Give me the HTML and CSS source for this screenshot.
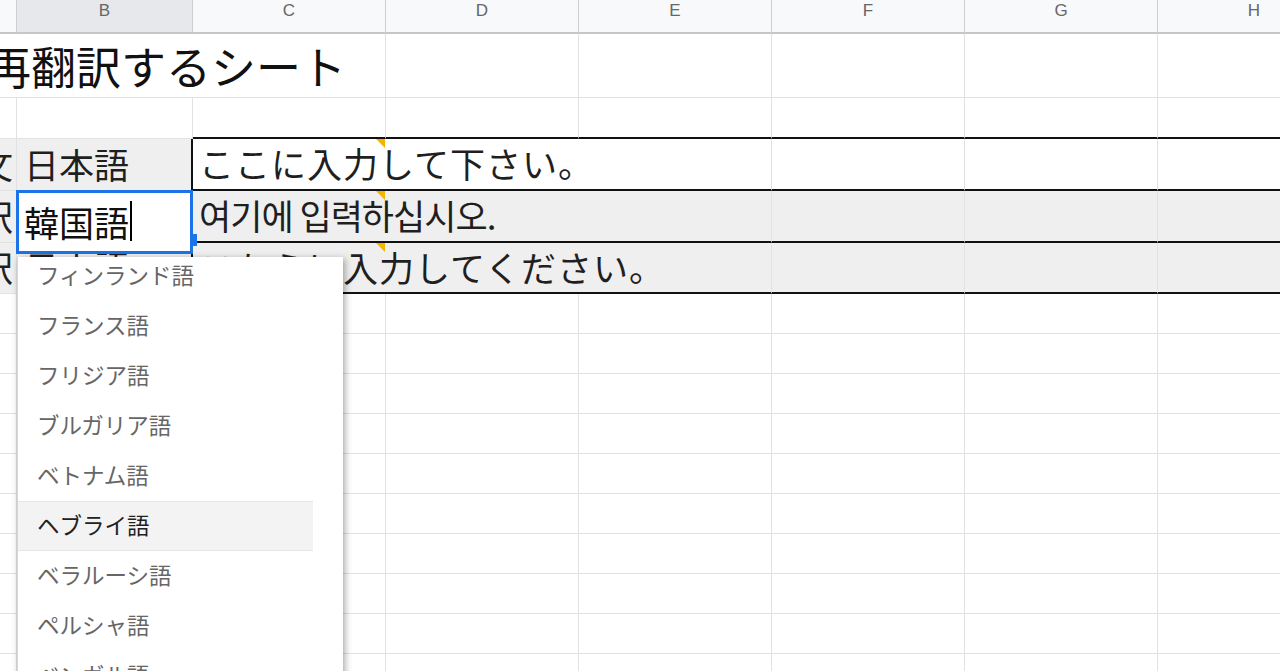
FILE: index.html
```html
<!DOCTYPE html>
<html>

<head>
  <title>再翻訳するシート</title>
  <link rel="stylesheet" href="styles.css">
</head>

<body>
  <div class="sheet">
    <div class="row heads">
      <div class="cell head col-a"></div>
      <div class="cell head col-b sel">B</div>
      <div class="cell head col">C</div>
      <div class="cell head col">D</div>
      <div class="cell head col">E</div>
      <div class="cell head col">F</div>
      <div class="cell head col">G</div>
      <div class="cell head col">H</div>
    </div>

    <div class="row r-title">
      <div class="cell title">再翻訳するシート</div>
      <div class="cell col"></div>
      <div class="cell col"></div>
      <div class="cell col"></div>
      <div class="cell col"></div>
      <div class="cell col"></div>
    </div>

    <div class="row r-gap">
      <div class="cell col-a"></div>
      <div class="cell col-b"></div>
      <div class="cell col boxed"></div>
      <div class="cell col boxed"></div>
      <div class="cell col boxed"></div>
      <div class="cell col boxed"></div>
      <div class="cell col boxed"></div>
      <div class="cell col boxed"></div>
    </div>

    <div class="row r-lang">
      <div class="cell col-a shade label">原文</div>
      <div class="cell col-b shade edge lang">日本語</div>
      <div class="cell merge boxed note ja">ここに入力して下さい。</div>
      <div class="cell col boxed"></div>
      <div class="cell col boxed"></div>
      <div class="cell col boxed"></div>
    </div>

    <div class="row r-lang">
      <div class="cell col-a shade label">翻訳</div>
      <div class="cell col-b shade edge lang">韓国語</div>
      <div class="cell merge boxed shade note ko">여기에 입력하십시오.</div>
      <div class="cell col boxed shade"></div>
      <div class="cell col boxed shade"></div>
      <div class="cell col boxed shade"></div>
    </div>

    <div class="row r-last">
      <div class="cell col-a shade label">再翻訳</div>
      <div class="cell col-b shade edge lang">日本語</div>
      <div class="cell merge boxed shade note ja">こちらに入力してください。</div>
      <div class="cell col boxed shade"></div>
      <div class="cell col boxed shade"></div>
      <div class="cell col boxed shade"></div>
    </div>

    <div class="row r-plain"><div class="cell col-a"></div><div class="cell col-b"></div><div class="cell col"></div><div class="cell col"></div><div class="cell col"></div><div class="cell col"></div><div class="cell col"></div><div class="cell col"></div></div>
    <div class="row r-plain"><div class="cell col-a"></div><div class="cell col-b"></div><div class="cell col"></div><div class="cell col"></div><div class="cell col"></div><div class="cell col"></div><div class="cell col"></div><div class="cell col"></div></div>
    <div class="row r-plain"><div class="cell col-a"></div><div class="cell col-b"></div><div class="cell col"></div><div class="cell col"></div><div class="cell col"></div><div class="cell col"></div><div class="cell col"></div><div class="cell col"></div></div>
    <div class="row r-plain"><div class="cell col-a"></div><div class="cell col-b"></div><div class="cell col"></div><div class="cell col"></div><div class="cell col"></div><div class="cell col"></div><div class="cell col"></div><div class="cell col"></div></div>
    <div class="row r-plain"><div class="cell col-a"></div><div class="cell col-b"></div><div class="cell col"></div><div class="cell col"></div><div class="cell col"></div><div class="cell col"></div><div class="cell col"></div><div class="cell col"></div></div>
    <div class="row r-plain"><div class="cell col-a"></div><div class="cell col-b"></div><div class="cell col"></div><div class="cell col"></div><div class="cell col"></div><div class="cell col"></div><div class="cell col"></div><div class="cell col"></div></div>
    <div class="row r-plain"><div class="cell col-a"></div><div class="cell col-b"></div><div class="cell col"></div><div class="cell col"></div><div class="cell col"></div><div class="cell col"></div><div class="cell col"></div><div class="cell col"></div></div>
    <div class="row r-plain"><div class="cell col-a"></div><div class="cell col-b"></div><div class="cell col"></div><div class="cell col"></div><div class="cell col"></div><div class="cell col"></div><div class="cell col"></div><div class="cell col"></div></div>
    <div class="row r-plain"><div class="cell col-a"></div><div class="cell col-b"></div><div class="cell col"></div><div class="cell col"></div><div class="cell col"></div><div class="cell col"></div><div class="cell col"></div><div class="cell col"></div></div>
    <div class="row r-plain"><div class="cell col-a"></div><div class="cell col-b"></div><div class="cell col"></div><div class="cell col"></div><div class="cell col"></div><div class="cell col"></div><div class="cell col"></div><div class="cell col"></div></div>

    <!-- cell being edited -->
    <div class="editor">韓国語<span class="caret"></span></div>
    <div class="handle"></div>

    <!-- autocomplete list -->
    <div class="menu">
      <div class="list">
        <div class="item">フィンランド語</div>
        <div class="item">フランス語</div>
        <div class="item">フリジア語</div>
        <div class="item">ブルガリア語</div>
        <div class="item">ベトナム語</div>
        <div class="item hover">ヘブライ語</div>
        <div class="item">ベラルーシ語</div>
        <div class="item">ペルシャ語</div>
        <div class="item">ベンガル語</div>
      </div>
    </div>
  </div>
</body>

</html>
```

FILE: styles.css
```css
* {
  box-sizing: border-box;
}
body {
  margin: 0;
  overflow: hidden;
  background-color: #fff;
  font-family: "Noto Sans CJK JP", "Noto Sans", sans-serif;
  color: #1f1f1f;
}
.sheet {
  position: relative;
  width: 1280px;
  height: 671px;
  overflow: hidden;
}
.row {
  display: flex;
}
.cell {
  flex: none;
  display: flex;
  align-items: center;
  white-space: nowrap;
  border-right: 1px solid #e2e2e2;
  border-bottom: 1px solid #e2e2e2;
  font-size: 35px;
}
.col-a {
  width: 17px;
}
.col-b {
  width: 176px;
}
.col {
  width: 193px;
}
.merge {
  position: relative;
  width: 579px;
  padding-left: 6px;
  padding-bottom: 3px;
}
.ja {
  letter-spacing: 1px;
}
.ko {
  letter-spacing: -1px;
}

/* column headers */
.heads {
  height: 34px;
}
.head {
  align-items: flex-start;
  justify-content: center;
  padding-top: 1px;
  background-color: #f8f9fa;
  border-right: 1px solid #cfcfcf;
  border-bottom: 2px solid #c6c6c6;
  font-family: "Liberation Sans", Arial, sans-serif;
  font-size: 17px;
  line-height: 20px;
  color: #666;
}
.head.sel {
  background-color: #e6e8eb;
}

/* rows */
.r-title {
  height: 64px;
}
.title {
  width: 386px;
  font-size: 45px;
  text-indent: -14px;
  color: #111;
}
.r-gap {
  height: 41px;
}
.r-lang {
  height: 52px;
}
.r-last {
  height: 51px;
}
.r-plain {
  height: 40px;
}

.shade {
  background-color: #efefef;
}
.boxed {
  border-bottom: 2px solid #111;
}
.edge {
  border-right: 2px solid #111;
}
.label {
  justify-content: flex-end;
  padding-right: 3px;
  padding-bottom: 3px;
  overflow: hidden;
}
.lang {
  padding-left: 7px;
  padding-bottom: 3px;
}

/* little comment marker */
.note::after {
  content: "";
  position: absolute;
  top: 0;
  left: 183px;
  border-style: solid;
  border-width: 0 9px 9px 0;
  border-color: transparent #f4b400 transparent transparent;
}

.editor {
  position: absolute;
  left: 16px;
  top: 190px;
  width: 177px;
  height: 64px;
  display: flex;
  align-items: center;
  padding-left: 5px;
  padding-bottom: 2px;
  background-color: #fff;
  border: 3px solid #1a73e8;
  font-size: 35px;
  color: #111;
}
.caret {
  width: 2px;
  height: 40px;
  margin-left: 1px;
  background-color: #000;
}
.handle {
  position: absolute;
  left: 192px;
  top: 234px;
  width: 5px;
  height: 12px;
  background-color: #1a73e8;
}

.menu {
  position: absolute;
  left: 17px;
  top: 257px;
  width: 326px;
  height: 430px;
  overflow: hidden;
  background-color: #fff;
  border-left: 1px solid #d6d6d6;
  box-shadow: 2px 2px 7px rgba(0, 0, 0, 0.35);
}
.list {
  margin-top: -6px;
}
.item {
  display: flex;
  align-items: center;
  width: 295px;
  height: 50px;
  padding-left: 19px;
  padding-bottom: 4px;
  font-size: 22.5px;
  color: #666;
}
.item.hover {
  background-color: #f3f3f3;
  border-top: 1px solid #e6e6e6;
  border-bottom: 1px solid #e6e6e6;
  color: #202124;
}
```
